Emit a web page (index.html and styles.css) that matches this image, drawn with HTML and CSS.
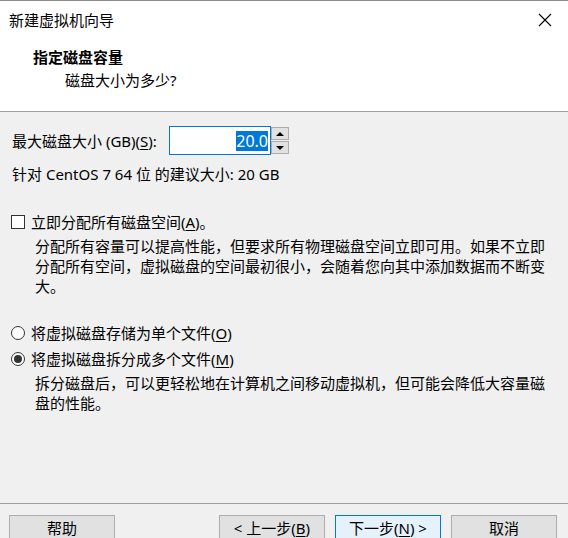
FILE: index.html
```html
<!DOCTYPE html>
<html lang="zh-CN">
<head>
<meta charset="utf-8">
<title>新建虚拟机向导</title>
<link rel="stylesheet" href="styles.css">
</head>
<body>
<div class="window">
  <header class="header">
    <div class="titlebar">
      <span class="title">新建虚拟机向导</span>
      <svg class="close" width="14" height="14" viewBox="0 0 14 14"><path d="M1 1 L13 13 M13 1 L1 13" stroke="#000" stroke-width="1.1" fill="none"/></svg>
    </div>
    <div class="heading">指定磁盘容量</div>
    <div class="subheading">磁盘大小为多少?</div>
  </header>

  <main class="content">
    <div class="size-row">
      <span class="label">最大磁盘大小 (GB)(<u>S</u>):</span>
      <div class="spin">
        <div class="spin-input"><span class="sel">20.0</span></div>
        <div class="spin-buttons">
          <div class="spin-btn"><span class="tri-up"></span></div>
          <div class="spin-btn"><span class="tri-down"></span></div>
        </div>
      </div>
    </div>
    <div class="recommend">针对 CentOS 7 64 位 的建议大小: 20 GB</div>

    <label class="option check-row">
      <span class="checkbox"></span>
      <span>立即分配所有磁盘空间(<u>A</u>)。</span>
    </label>
    <p class="desc">分配所有容量可以提高性能，但要求所有物理磁盘空间立即可用。如果不立即分配所有空间，虚拟磁盘的空间最初很小，会随着您向其中添加数据而不断变大。</p>

    <label class="option radio-row first">
      <span class="radio"></span>
      <span>将虚拟磁盘存储为单个文件(<u>O</u>)</span>
    </label>
    <label class="option radio-row">
      <span class="radio checked"></span>
      <span>将虚拟磁盘拆分成多个文件(<u>M</u>)</span>
    </label>
    <p class="desc">拆分磁盘后，可以更轻松地在计算机之间移动虚拟机，但可能会降低大容量磁盘的性能。</p>
  </main>

  <footer class="footer">
    <div class="buttons">
      <button class="btn">帮助</button>
      <div class="spacer"></div>
      <button class="btn">&lt; 上一步(<u>B</u>)</button>
      <button class="btn default">下一步(<u>N</u>) &gt;</button>
      <button class="btn">取消</button>
    </div>
  </footer>
</div>
</body>
</html>
```

FILE: styles.css
```css
* { box-sizing: border-box; }
html, body { margin: 0; padding: 0; }
body {
  width: 568px;
  height: 538px;
  overflow: hidden;
  background: #f0f0f0;
  font-family: "Noto Sans", "Noto Sans CJK SC", sans-serif;
  font-size: 15px;
  color: #000;
}
u { text-decoration: underline; text-underline-offset: 2px; }

.window {
  border-top: 1px solid #8c8c8c;
  height: 538px;
  display: flex;
  flex-direction: column;
}

.header {
  background: #fff;
  height: 111px;
  border-bottom: 1px solid #a0a0a0;
  padding-top: 9px;
}
.titlebar {
  display: flex;
  justify-content: space-between;
  align-items: center;
  padding: 0 16px 0 9px;
  height: 20px;
  line-height: 20px;
}
.close { display: block; }
.heading {
  margin-top: 17px;
  padding-left: 33px;
  font-weight: bold;
  line-height: 20px;
}
.subheading {
  margin-top: 3px;
  padding-left: 65px;
  line-height: 20px;
}

.content {
  padding: 14px 12px 0 12px;
  flex: 1;
}
.size-row {
  display: flex;
  align-items: center;
  height: 29px;
}
.label { line-height: 20px; width: 157px; }
.spin {
  display: flex;
  height: 29px;
}
.spin-input {
  width: 102px;
  height: 29px;
  background: #fff;
  border: 1px solid #0078d7;
  display: flex;
  align-items: center;
  justify-content: flex-end;
  padding-right: 2px;
}
.sel {
  background: #0078d7;
  color: #fff;
  line-height: 20px;
  font-size: 16px;
}
.spin-buttons {
  display: flex;
  flex-direction: column;
  width: 18px;
  padding: 1px 0;
  gap: 1px;
}
.spin-btn {
  flex: 1;
  background: #e1e1e1;
  border: 1px solid #adadad;
  display: flex;
  align-items: center;
  justify-content: center;
}
.tri-up, .tri-down {
  width: 0; height: 0;
  border-left: 4px solid transparent;
  border-right: 4px solid transparent;
}
.tri-up { border-bottom: 4px solid #000; }
.tri-down { border-top: 4px solid #000; }

.recommend {
  margin-top: 9px;
  line-height: 20px;
}

.option {
  display: flex;
  align-items: center;
  gap: 6px;
  line-height: 20px;
  margin-left: -1px;
}
.check-row { margin-top: 28px; }
.checkbox {
  width: 14px; height: 14px;
  border: 1px solid #333;
  background: #fff;
  flex: none;
}
.radio {
  width: 14px; height: 14px;
  border: 1px solid #333;
  border-radius: 50%;
  background: #fff;
  flex: none;
  display: flex;
  align-items: center;
  justify-content: center;
}
.radio.checked::after {
  content: "";
  width: 8px; height: 8px;
  border-radius: 50%;
  background: #333;
}
.desc {
  margin: 4px 0 0 23px;
  line-height: 20px;
  padding-right: 4px;
}
.radio-row { margin-top: 6px; }
.radio-row.first { margin-top: 27px; }

.footer {
  border-top: 1px solid #a0a0a0;
  height: 35px;
  padding-top: 11px;
}
.buttons {
  display: flex;
  padding: 0 11px 0 9px;
  gap: 10px;
}
.spacer { flex: 1; }
.btn {
  width: 106px;
  height: 26px;
  background: #e1e1e1;
  border: 1px solid #adadad;
  font: inherit;
  color: #000;
  padding: 0;
  line-height: 22px;
  flex: none;
}
.btn.default {
  background: #e5f1fb;
  border-color: #0078d7;
}
```
